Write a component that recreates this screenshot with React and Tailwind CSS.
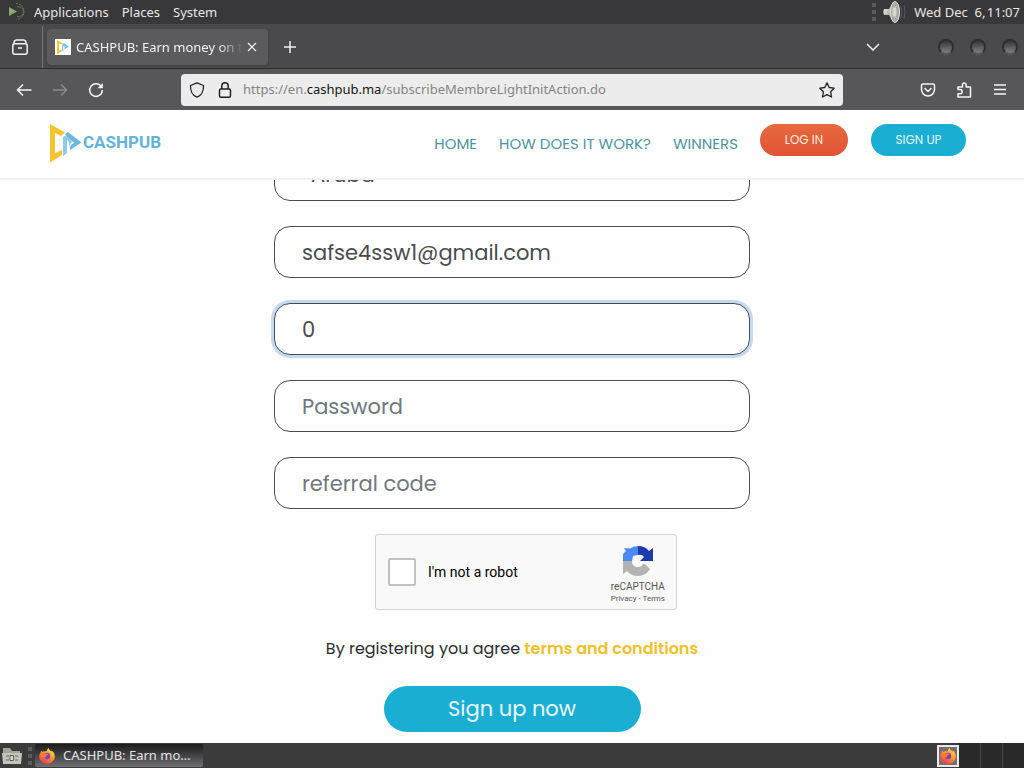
import { useState } from 'react';
import clsx from 'clsx';

const menus = ['Applications', 'Places', 'System'];

const links = ['Home', 'How does it work?', 'Winners'];

const field =
  'h-[52px] w-full rounded-2xl border border-[#4b4b52] bg-white px-[27px] text-[21px] text-[#4b4b4f] placeholder:text-[#6f777d] outline-none focus:border-[#2f5078] focus:ring-[3px] focus:ring-[#c3d9f0]';

function Firefox({ className }) {
  return (
    <svg viewBox="0 0 16 16" className={className} aria-hidden="true">
      <defs>
        <linearGradient id="fox" x1="0.8" y1="0" x2="0.2" y2="1">
          <stop offset="0" stopColor="#ffe14a" />
          <stop offset="0.45" stopColor="#ff9a28" />
          <stop offset="1" stopColor="#f0305c" />
        </linearGradient>
      </defs>
      <path
        fill="url(#fox)"
        d="M1.2 5.2C1.6 3.9 2.3 3 2.9 2.5c0 .8.2 1.2.5 1.5C4.200 3.300 5 3.100 5.600 3.200 6.800 3.400 7.500 3.500 8 3 7.900 1.800 8.600.6 9.700 0c.3 1.800 1.500 2.500 2.600 3.500.3-.3.4-.7.4-1.100C14.700 3.800 15.800 6 15.800 8.300c0 4.200-3.500 7.500-7.800 7.500S.2 12.500.2 8.300c0-1.200.4-2.200 1-3.100z"
      />
      <circle cx="8" cy="8" r="3.200" fill="#7a3fc8" />
      <path fill="#ff7a2c" d="M2.500 6C4 4.500 6 4.700 7.600 5.800c.8.1 1.500 0 1.800.2-.2.800-1 1.100-1.800 1.500-.6.400-.7 1.100-.4 1.600-1.500 1-3.500.4-4.400-1z" />
    </svg>
  );
}

function PlayMark({ className }) {
  return (
    <svg viewBox="0 0 32 38" className={className} aria-hidden="true">
      <path fill="#f4c430" d="M0 0 15 8.500 11 12 5 9v20l7-3v5L1 38H0z" />
      <path fill="#6cb8dc" d="m15 10 3-2 13.500 10.500L20 26v-4l4-3.500-7-5z" />
      <path fill="#8fcbe8" d="M13 13q2-2 5 0l4 5-3 4v-4l-2-2v13l-4 3z" />
    </svg>
  );
}

function Grip({ className }) {
  return (
    <span className={clsx('flex flex-col gap-[3px]', className)}>
      <i className="size-1 bg-[#5b5b5b]" />
      <i className="size-1 bg-[#5b5b5b]" />
      <i className="size-1 bg-[#5b5b5b]" />
    </span>
  );
}

function TopPanel() {
  return (
    <div className="flex h-6 shrink-0 items-center bg-[#38383a] text-[13px] leading-6 text-[#e6e6e6]">
      <svg viewBox="0 0 20 20" className="ml-2 size-5" fill="none" stroke="#66784c" aria-hidden="true">
        <path d="M1 5v9l8-4.500z" fill="#8fa772" stroke="none" />
        <path d="M8 1.500a8 8 0 1 1 0 16" strokeDasharray="2 1" />
        <path d="M9 5a5 5 0 1 1 0 9.500" />
      </svg>
      <nav className="ml-1.5 flex gap-[13px]">
        {menus.map((m) => (
          <button key={m} type="button">{m}</button>
        ))}
      </nav>
      <Grip className="ml-auto" />
      <svg viewBox="0 0 24 24" className="ml-1.5 size-6" aria-hidden="true">
        <defs>
          <linearGradient id="cone" x1="0" y1="0" x2="1" y2="1">
            <stop offset="0" stopColor="#f4f4f0" />
            <stop offset="1" stopColor="#8b8b86" />
          </linearGradient>
        </defs>
        <path d="M2 9q-1.500 3 0 6h5l4 6V3L7 9z" fill="url(#cone)" />
        <ellipse cx="13" cy="12" rx="4.500" ry="10.500" fill="#aaa9a2" stroke="#e0e0dc" />
        <ellipse cx="12.500" cy="12" rx="2" ry="5" fill="#d8d8d4" />
        <path d="M19 6q2 6 0 12M22 5q2 7 0 14" stroke="#55555f" fill="none" />
      </svg>
      <time className="mr-1 ml-2">Wed Dec&nbsp; 6,&#8202;11:07</time>
    </div>
  );
}

function TabStrip() {
  return (
    <div className="flex h-[45px] shrink-0 items-center border-b border-[#2e2e30] bg-[#4a4a4d] pt-0.5 text-[#f2f2f2]">
      <button type="button" aria-label="Firefox View" className="ml-3">
        <svg viewBox="0 0 16 16" className="size-4" fill="none" stroke="currentColor" strokeWidth="1.500">
          <rect x="0.800" y="4.800" width="14.400" height="10.400" rx="2" />
          <path d="M3.500 1h9M2 4.800Q2 1.200 4 1M14 4.800Q14 1.200 12 1M6 9h4" />
        </svg>
      </button>
      <div className="ml-3.5 h-full w-px bg-[#77777a]" />
      <div className="ml-1 flex h-9 w-[221px] items-center rounded bg-[#5b5b5e] pr-[11px] pl-2 text-[13px] shadow">
        <span className="flex size-4 shrink-0 items-center justify-center bg-white">
          <PlayMark className="size-3.5" />
        </span>
        <span className="ml-[5px] h-[18px] flex-1 overflow-hidden leading-[18px] break-all [mask-image:linear-gradient(to_right,black_85%,transparent)]">
          CASHPUB: Earn money on the
        </span>
        <button type="button" aria-label="Close tab" className="ml-1">
          <svg viewBox="0 0 10 10" className="size-2.5" stroke="currentColor" strokeWidth="1.200">
            <path d="m1 1 8 8M9 1 1 9" />
          </svg>
        </button>
      </div>
      <button type="button" aria-label="New tab" className="ml-[15px]">
        <svg viewBox="0 0 14 14" className="size-3.5" stroke="currentColor" strokeWidth="1.500">
          <path d="M7 1v12M1 7h12" />
        </svg>
      </button>
      <button type="button" aria-label="List all tabs" className="mr-[58px] ml-auto">
        <svg viewBox="0 0 14 8" className="h-2 w-3.5" fill="none" stroke="currentColor" strokeWidth="1.500">
          <path d="m1 1 6 6 6-6" />
        </svg>
      </button>
      <div className="mr-1.5 flex gap-4">
        {['Minimise', 'Maximise', 'Close'].map((w) => (
          <button
            key={w}
            type="button"
            aria-label={w}
            className="size-4 rounded-full border-2 border-[#2f2f31] border-b-[#58585b] bg-linear-to-b from-[#38383a] to-[#808083]"
          />
        ))}
      </div>
    </div>
  );
}

function Toolbar() {
  return (
    <div className="flex h-[41px] shrink-0 items-center bg-[#57575a] px-4 text-[#f5f5f5]">
      <button type="button" aria-label="Back">
        <svg viewBox="0 0 16 16" className="size-4" fill="none" stroke="currentColor" strokeWidth="1.500">
          <path d="M15.500 8H1.500M7 2.500 1.500 8 7 13.500" />
        </svg>
      </button>
      <button type="button" aria-label="Forward" className="ml-5 text-[#8c8c8e]">
        <svg viewBox="0 0 16 16" className="size-4" fill="none" stroke="currentColor" strokeWidth="1.500">
          <path d="M1 8h13.500M9 2.500 14.500 8 9 13.500" />
        </svg>
      </button>
      <button type="button" aria-label="Reload" className="ml-5">
        <svg viewBox="0 0 16 16" className="size-4" fill="none" stroke="currentColor" strokeWidth="1.500">
          <path d="M13.500 5A6.300 6.300 0 1 0 14.300 8" />
          <path d="M14.800 1v5.200H9.600z" fill="currentColor" stroke="none" />
        </svg>
      </button>
      <div className="mr-[77px] ml-[77px] flex h-8 flex-1 items-center rounded-sm bg-[#ececec] px-2 text-[13px] text-[#222]">
        <svg viewBox="0 0 16 16" className="size-4 shrink-0" fill="none" stroke="currentColor" strokeWidth="1.300" aria-hidden="true">
          <path d="M8 .8 14.500 3.500C14.800 8.500 12.500 13.500 8 15.200 3.500 13.500 1.200 8.500 1.500 3.500z" strokeLinejoin="round" />
        </svg>
        <svg viewBox="0 0 16 16" className="ml-3 size-4 shrink-0" fill="none" stroke="currentColor" strokeWidth="1.500" aria-hidden="true">
          <rect x="2.500" y="7" width="11" height="8.200" rx="1.500" />
          <path d="M4.800 7V4a3.200 3.200 0 0 1 6.400 0v3" />
        </svg>
        <span className="ml-2.5 flex-1 text-[#858585]">
          https://en.<span className="text-[#151515]">cashpub.ma</span>/subscribeMembreLightInitAction.do
        </span>
        <button type="button" aria-label="Bookmark this page">
          <svg viewBox="0 0 16 16" className="size-4" fill="none" stroke="currentColor" strokeWidth="1.300" strokeLinejoin="round">
            <path d="m8 .9 2.200 4.600 5 .7-3.600 3.600.9 5.200L8 12.600 3.500 15l.9-5.200L.8 6.200l5-.7z" />
          </svg>
        </button>
      </div>
      <div className="flex items-center gap-5">
        <button type="button" aria-label="Save to Pocket">
          <svg viewBox="0 0 16 16" className="size-4" fill="none" stroke="currentColor" strokeWidth="1.500" strokeLinecap="round" strokeLinejoin="round">
            <path d="M3 2h10q1.500 0 1.500 1.500V7.500a6.500 6.500 0 0 1-13 0V3.500Q1.500 2 3 2zM5 6.500l3 3 3-3" />
          </svg>
        </button>
        <button type="button" aria-label="Extensions">
          <svg viewBox="0 0 16 16" className="size-4" fill="none" stroke="currentColor" strokeWidth="1.500" strokeLinejoin="round">
            <path d="M2 7.500V5h4.500V2.800a1.800 1.800 0 0 1 3.600 0V5h4.400v10H2v-3.200h2a2.100 2.100 0 0 0 0-4.300z" />
          </svg>
        </button>
        <button type="button" aria-label="Open menu">
          <svg viewBox="0 0 16 16" className="size-4" stroke="currentColor" strokeWidth="1.500">
            <path d="M2 3h12M2 7.500h12M2 12h12" />
          </svg>
        </button>
      </div>
    </div>
  );
}

function SiteHeader() {
  return (
    <header className="absolute inset-x-0 top-0 z-10 flex h-[70px] items-start border-b-2 border-[#f1f1f1] bg-white pr-[58px] pl-[50px]">
      <a href="#home" className="mt-3.5 flex items-center">
        <PlayMark className="h-[38px] w-8" />
        <span className="ml-px font-[Roboto,sans-serif] text-[17px] font-bold text-[#64b3d6]">CASHPUB</span>
      </a>
      <nav className="mt-[22px] ml-auto flex gap-[22px] text-[15px] leading-6 text-[#4f929f] uppercase">
        {links.map((l) => (
          <a key={l} href="#nav" className="whitespace-nowrap">{l}</a>
        ))}
      </nav>
      <a href="#login" className="mt-3.5 ml-[22px] flex h-8 w-[88px] items-center justify-center rounded-full bg-linear-to-b from-[#e8693f] to-[#df5434] text-xs text-[#fbeadd]">
        LOG IN
      </a>
      <a href="#signup" className="mt-3.5 ml-[23px] flex h-8 w-[95px] items-center justify-center rounded-full bg-[#1baed3] text-xs text-[#e4f7fb]">
        SIGN UP
      </a>
    </header>
  );
}

function Captcha() {
  return (
    <div className="ml-[101px] flex h-[76px] w-[302px] items-center rounded-[3px] border border-[#d3d3d3] bg-[#f9f9f9] pr-[11px] pl-3 font-[Roboto,sans-serif]">
      <input id="robot" type="checkbox" className="size-7 appearance-none rounded-xs border-2 border-[#c1c1c1] bg-white" />
      <label htmlFor="robot" className="ml-3 text-sm text-black">I'm not a robot</label>
      <div className="ml-auto flex flex-col items-center pt-1.5 text-[#555]">
        <svg viewBox="0 0 32 32" className="size-8" aria-hidden="true">
          <path fill="#4a8af4" d="M16 1v9l-5 1-1 5H1V9l3-3-2-3 6 .5Q11 1 16 1z" />
          <path fill="#1c3aa9" d="M16 1q7 0 11 5l4-3v13H18l4-4q-2-3-6-2z" />
          <path fill="#b3b3b3" d="M1 16h9q0 6 6 6 4 0 5-3h2l5 5q-4 7-12 7-7 0-11-5l-4 3z" />
        </svg>
        <span className="mt-1 text-[10px] leading-3">reCAPTCHA</span>
        <span className="text-[8px] leading-3">
          <a href="#privacy">Privacy</a> - <a href="#terms">Terms</a>
        </span>
      </div>
    </div>
  );
}

function SignUpForm() {
  const [email, setEmail] = useState('safse4ssw1@gmail.com');
  const [phone, setPhone] = useState('0');

  return (
    <form className="mx-auto flex w-full max-w-[476px] flex-col gap-[25px] pt-[39px]" onSubmit={(e) => e.preventDefault()}>
      <select aria-label="Country" className={clsx(field, 'appearance-none pl-9')}>
        <option>Aruba</option>
      </select>
      <input aria-label="Email" type="email" className={field} value={email} onChange={(e) => setEmail(e.target.value)} />
      <input
        aria-label="Phone"
        className={clsx(field, 'border-[#2f5078] ring-[3px] ring-[#c3d9f0]')}
        value={phone}
        onChange={(e) => setPhone(e.target.value)}
      />
      <input aria-label="Password" type="password" className={field} placeholder="Password" />
      <input aria-label="Referral code" className={field} placeholder="referral code" />
      <Captcha />
      <p className="mt-0.5 text-center text-base leading-6 text-[#2a2c33]">
        By registering you agree <a href="#terms" className="font-semibold text-[#efc12c]">terms and conditions</a>
      </p>
      <button type="submit" className="mx-auto h-[46px] w-[257px] rounded-full bg-[#1baed3] text-[21px] text-[#e9f8fc]">
        Sign up now
      </button>
    </form>
  );
}

function BottomPanel() {
  return (
    <div className="flex h-[25px] shrink-0 items-center bg-[#3b3b3b] text-[13px] text-[#e2e2e2]">
      <button type="button" aria-label="Show desktop" className="ml-0.5">
        <svg viewBox="0 0 20 18" className="h-[18px] w-5">
          <path fill="#a3a59a" d="M1 1h7l2 3h8v4H1z" />
          <path fill="#c3c5b9" d="M0 6h20l-1 11H1z" />
          <path d="M4 9h3M4 13h3M13 9h3M13 13h3" stroke="#85877c" strokeWidth="1.500" />
          <path fill="#dcded4" stroke="#5c5d56" d="M8 8.500h3.500v5H8z" />
        </svg>
      </button>
      <Grip className="ml-1.5" />
      <button type="button" className="ml-[3px] flex h-[23px] w-[168px] items-center gap-2 rounded-xs bg-linear-to-b from-[#1c1c1e] to-[#707073] px-1">
        <Firefox className="size-4 shrink-0" />
        <span>CASHPUB: Earn mo…</span>
      </button>
      <div className="ml-auto flex h-full items-center">
        <div className="flex size-[22px] items-center justify-center border-2 border-[#e9e9e9] bg-[#77706f]">
          <Firefox className="size-4" />
        </div>
        <div className="h-full w-[22px] border-r border-[#484848] bg-[#29292a]" />
        <div className="h-full w-[22px] border-r border-[#484848] bg-[#29292a]" />
        <div className="h-full w-[21px] bg-[#29292a]" />
      </div>
    </div>
  );
}

export default function App() {
  return (
    <div className="flex h-screen flex-col overflow-hidden bg-white font-['Noto_Sans',sans-serif]">
      <TopPanel />
      <TabStrip />
      <Toolbar />
      <main className="relative flex-1 overflow-hidden bg-[#fefefe] font-[Poppins,sans-serif]">
        <SiteHeader />
        <SignUpForm />
      </main>
      <BottomPanel />
    </div>
  );
}
